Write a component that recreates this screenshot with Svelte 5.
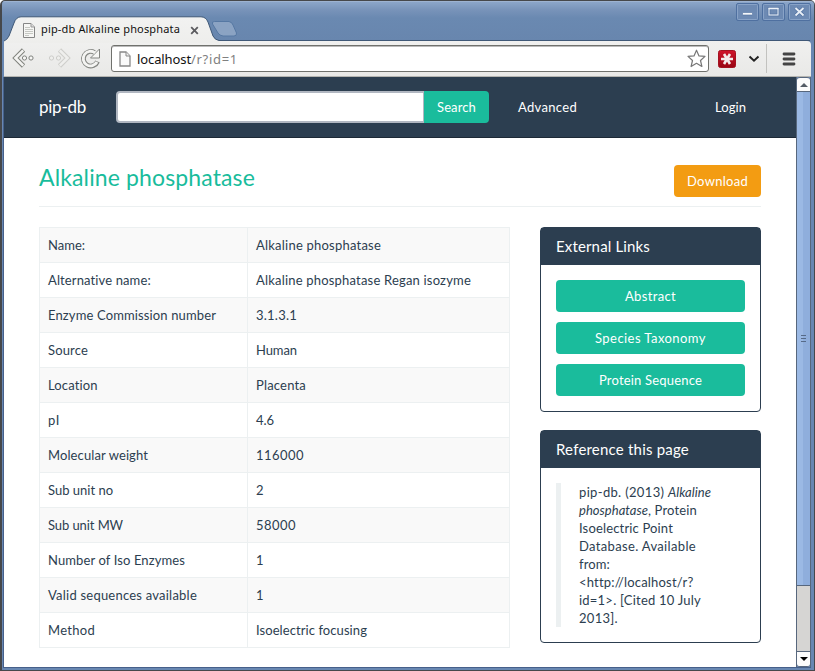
<script>
  const rows = [
    ['Name:', 'Alkaline phosphatase', 37, 125],
    ['Alternative name:', 'Alkaline phosphatase Regan isozyme', 103, 215],
    ['Enzyme Commission number', '3.1.3.1', 168, 41],
    ['Source', 'Human', 40, 41],
    ['Location', 'Placenta', 50, 50],
    ['pI', '4.6', 12, 18],
    ['Molecular weight', '116000', 100, 48],
    ['Sub unit no', '2', 65, 8],
    ['Sub unit MW', '58000', 75, 40],
    ['Number of Iso Enzymes', '1', 137, 8],
    ['Valid sequences available', '1', 149, 8],
    ['Method', 'Isoelectric focusing', 47, 111]
  ];
  const links = [['Abstract', 51], ['Species Taxonomy', 111], ['Protein Sequence', 103]];
  const quote = [
    [['pip-db. (2013) ', 89, 0], ['Alkaline', 43, 1]],
    [['phosphatase', 69, 1], [', Protein', 49, 0]],
    [['Isoelectric Point', 94, 0]],
    [['Database. Available', 117, 0]],
    [['from:', 31, 0]],
    [['<http://localhost/r?', 114, 0]],
    [['id=1>. [Cited 10 July', 122, 0]],
    [['2013].', 39, 0]]
  ];

  // Spreads the glyphs evenly so that the run takes up exactly w pixels.
  function fit(node, w) {
    const range = document.createRange();
    range.selectNodeContents(node);
    const n = node.textContent.length;
    const apply = () => {
      node.style.letterSpacing = '0px';
      const natural = range.getBoundingClientRect().width;
      node.style.letterSpacing = (w - natural) / n + 'px';
    };
    apply();
    document.fonts?.ready.then(apply);
  }
</script>

<div class="window">
  <header class="titlebar">
    <svg class="tabs" width="240" height="28" viewBox="0 0 240 28">
      <defs><linearGradient id="tab" x2="0" y2="1"><stop stop-color="#f2f2f1" /><stop offset="1" stop-color="#eeeeec" /></linearGradient></defs>
      <path d="M0 28V26Q3 25 5 21L10 8Q12 2 17 1.800H197Q202 2 204 7L209 21Q211 25 215 25.500V28Z" fill="url(#tab)" />
      <path d="M0 26Q3 25 5 21L10 8Q12 2 17 1.800H197Q202 2 204 7L209 21Q211 25 215 25.500" fill="none" stroke="#3f5877" />
      <path d="M210.500 6.500H225Q228 7 229 10L232.500 18Q233 21 230 21H219Q215.500 20.500 214 18L208.500 9Q207.500 6.500 210.500 6.500Z" fill="#8ba3c3" stroke="#5678a3" />
    </svg>
    <div class="tabtext">
      <svg width="14" height="17" viewBox="0 0 14 17"><path d="M1.500 1.500H9L12.500 5V15.500H1.500Z" fill="#f6f6f4" stroke="#858585" /><path d="M9 1.500V5H12.500" fill="#ddd" stroke="#999" /><path d="M3 5.500H8M3 7.500H11M3 9.500H11M3 11.500H11M3 13.500H7" stroke="#c5c7c2" /></svg>
      <span class="label"><span use:fit={139}>pip-db Alkaline phosphata</span></span>
      <svg width="9" height="9" viewBox="0 0 9 9"><path d="M1.200 1.200L7.800 7.800M7.800 1.200L1.200 7.800" stroke="#5b5b5f" stroke-width="1.800" /></svg>
    </div>
    <div class="controls">
      <svg width="23" height="18" viewBox="0 0 23 18"><rect x=".5" y=".5" width="22" height="17" rx="1.500" class="b" /><rect x="1.500" y="1.500" width="20" height="15" rx="1" class="i" /><rect x="6.500" y="9.500" width="10" height="2.500" rx=".5" fill="#f4f7fa" stroke="#5070a0" stroke-width=".6" /></svg>
      <svg width="23" height="18" viewBox="0 0 23 18"><rect x=".5" y=".5" width="22" height="17" rx="1.500" class="b" /><rect x="1.500" y="1.500" width="20" height="15" rx="1" class="i" /><rect x="7" y="5.500" width="9" height="6.500" fill="none" stroke="#5070a0" stroke-width="2.600" /><rect x="7" y="5.500" width="9" height="6.500" fill="none" stroke="#e0e8f2" stroke-width="1.200" /><path d="M6.500 5.500H16.500" stroke="#eef3f9" stroke-width="1.500" /></svg>
      <svg width="23" height="18" viewBox="0 0 23 18"><rect x=".5" y=".5" width="22" height="17" rx="1.500" class="b" /><rect x="1.500" y="1.500" width="20" height="15" rx="1" class="i" /><path d="M7.500 5L15.500 12.500M15.500 5L7.500 12.500" stroke="#5070a0" stroke-width="3.200" /><path d="M7.500 5L15.500 12.500M15.500 5L7.500 12.500" stroke="#e8eef6" stroke-width="1.900" /></svg>
    </div>
  </header>

  <div class="toolbar">
    <svg class="nav" width="92" height="26" viewBox="0 0 92 26">
      <g fill="none" stroke-linejoin="miter">
        <path d="M15.500 4L7.500 12L15.500 20" stroke="#83857f" stroke-width="4.600" />
        <path d="M15.200 4.400L7.500 12L15.200 19.600" stroke="#f4f4f2" stroke-width="2.600" />
        <g stroke="#80827e" fill="#f7f7f5"><circle cx="16.500" cy="12" r="2.100" /><circle cx="23" cy="12" r="2.100" /></g>
        <path d="M51.500 4L59.500 12L51.500 20" stroke="#cfcfcc" stroke-width="4.600" />
        <path d="M51.800 4.400L59.500 12L51.800 19.600" stroke="#efefed" stroke-width="2.600" />
        <g stroke="#cdcdca" fill="#efefed"><circle cx="43.500" cy="12" r="2.100" /><circle cx="50.500" cy="12" r="2.100" /></g>
        <path d="M89.500 15.500A7.300 7.300 0 1 1 86.500 6.500" stroke="#858783" stroke-width="4.800" />
        <path d="M91.500 3V12H82.500Z" fill="#f7f7f5" stroke="#858783" />
        <path d="M89 16A7.300 7.300 0 1 1 87 6.800" stroke="#f4f4f2" stroke-width="2.800" />
      </g>
    </svg>
    <div class="omnibox">
      <svg width="12" height="16" viewBox="0 0 12 16"><path d="M1 1H7L11 5V15H1Z" fill="#fafafa" stroke="#888" stroke-width="1.300" /><path d="M7 1V5H11" fill="#eee" stroke="#888" /></svg>
      <span class="url"><span class="host" use:fit={54}>localhost</span><span use:fit={47}>/r?id=1</span></span>
      <svg width="19" height="19" viewBox="0 0 19 19"><path d="M9.500 1.200L12 6.900L18 7.400L13.500 11.500L14.900 17.500L9.500 14.300L4.100 17.500L5.500 11.500L1 7.400L7 6.900Z" fill="#fff" stroke="#777" stroke-width="1.200" stroke-linejoin="round" /></svg>
    </div>
    <svg class="ext" width="18" height="18" viewBox="0 0 18 18"><defs><linearGradient id="red" x2="0" y2="1"><stop stop-color="#d0142b" /><stop offset="1" stop-color="#990613" /></linearGradient></defs><rect x=".5" y=".5" width="17" height="17" rx="2" fill="url(#red)" stroke="#a31320" /><path d="M3 9H15M6 4L12 14M12 4L6 14" stroke="#f4ecec" stroke-width="2.600" /></svg>
    <svg class="chev" width="12" height="8" viewBox="0 0 12 8"><path d="M1.500 1.500L6 5.700L10.500 1.500" fill="none" stroke="#222" stroke-width="2" /></svg>
    <span class="sep"></span>
    <svg class="menu" width="14" height="14" viewBox="0 0 14 14"><path d="M2 2H12M2 7H12M2 12H12" stroke="#444" stroke-width="2.800" stroke-linecap="round" /></svg>
  </div>

  <div class="viewport">
    <main class="page">
      <nav class="navbar">
        <span class="brand"><span use:fit={47}>pip-db</span></span>
        <div class="search"></div>
        <div class="go"><span use:fit={39}>Search</span></div>
        <span class="adv"><span use:fit={59}>Advanced</span></span>
        <span class="login"><span use:fit={31}>Login</span></span>
      </nav>
      <div class="heading">
        <h1><span use:fit={216}>Alkaline phosphatase</span></h1>
        <div class="download"><span use:fit={61}>Download</span></div>
      </div>
      <div class="columns">
        <div class="left">
          <div class="table">
            {#each rows as [k, v, kw, vw]}
              <div class="row">
                <div class="key"><span use:fit={kw}>{k}</span></div>
                <div class="val"><span use:fit={vw}>{v}</span></div>
              </div>
            {/each}
          </div>
          <p class="note"><span use:fit={222}>All data and resources are collected</span></p>
        </div>
        <aside>
          <section>
            <h2><span use:fit={94}>External Links</span></h2>
            <div class="links">
              {#each links as [name, w]}<div class="btn"><span use:fit={w}>{name}</span></div>{/each}
            </div>
          </section>
          <section>
            <h2><span use:fit={133}>Reference this page</span></h2>
            <blockquote>
              {#each quote as line}
                <div>{#each line as [t, w, it]}<span class:it use:fit={w}>{t}</span>{/each}</div>
              {/each}
            </blockquote>
          </section>
        </aside>
      </div>
    </main>
    <div class="scroll">
      <div class="arrow up"><svg width="8" height="5" viewBox="0 0 8 5"><path d="M0 5L4 1L8 5Z" fill="#555d66" /></svg></div>
      <div class="thumb"><i></i><i></i><i></i></div>
      <div class="track"></div>
      <div class="arrow down"><svg width="8" height="5" viewBox="0 0 8 5"><path d="M0 0H8L4 4Z" fill="#000" /></svg></div>
    </div>
  </div>
</div>

<style>
  :global(body) { background: #fff; }
  * { box-sizing: border-box; }
  .window {
    width: 815px; height: 671px; overflow: hidden; display: flex; flex-direction: column;
    border: 1px solid #46484b; border-left-width: 2px; border-radius: 5px 5px 0 0;
    background: #6887b2; font: 13px/18px Lato, sans-serif; color: #2c3e50;
  }
  span { white-space: pre; }
  .titlebar { height: 40px; flex: none; position: relative; background: linear-gradient(#8ca6c9 0, #7893b9 8px, #6a89b1 16px, #6886ae 38px); border-top: 1px solid #9db3d1; }
  .titlebar::after { content: ''; position: absolute; left: 216px; right: 4px; bottom: 0; height: 1px; background: #3f5877; }
  .tabs { position: absolute; left: 2px; top: 13px; z-index: 1; }
  .tabtext { position: absolute; z-index: 2; left: 20px; top: 18px; display: flex; align-items: center; height: 20px; }
  .label { width: 149px; margin-left: 5px; margin-top: -2px; color: #111; font: 11px/18px 'Noto Sans', sans-serif; }
  .controls { position: absolute; right: 3px; top: 1px; display: flex; gap: 3px; }
  .b { fill: #6d8ab3; stroke: #4f70a0; }
  .i { fill: none; stroke: #89a3c7; }
  .toolbar { height: 36px; flex: none; margin: 0 3px 0 2px; background: linear-gradient(#f0f0ef, #e9e9e7); border-bottom: 1px solid #b5b5b1; border-top-right-radius: 4px; display: flex; align-items: center; }
  .nav { margin-left: 4px; flex: none; }
  .omnibox { margin-left: 11px; width: 598px; height: 27px; border: 1px solid #70716d; border-radius: 3px; background: #fff; box-shadow: inset 0 1px #bbb; display: flex; align-items: center; padding: 0 2px 0 7px; }
  .url { flex: 1; margin-left: 6px; color: #808080; font: 13px/20px 'Noto Sans', sans-serif; }
  .host { color: #111; }
  .ext { margin-left: 9px; }
  .chev { margin-left: 12px; }
  .sep { width: 1px; height: 29px; background: #c2c2bf; margin-left: 6px; }
  .menu { margin-left: 15px; }
  .viewport { height: 591px; flex: none; margin: 0 3px 0 1px; border-left: 1px solid #46608a; border-bottom: 1px solid #46608a; display: flex; }
  .page { width: 792px; height: 590px; overflow: hidden; background: #fff; }
  .navbar { height: 61px; background: #2c3e50; border-bottom: 1px solid #1d2936; display: flex; align-items: center; padding-left: 35px; color: #fff; }
  .brand { width: 77px; font-size: 17px; }
  .search { width: 308px; height: 32px; background: #fff; border: 2px solid #b1b7c1; border-right-width: 1px; border-radius: 4px 0 0 4px; }
  .go { width: 65px; height: 32px; line-height: 32px; padding-left: 13px; background: #1abc9c; border-radius: 0 4px 4px 0; }
  .adv { margin-left: 29px; width: 197px; }
  .heading { margin: 0 35px; height: 69px; border-bottom: 1px solid #ecf0f1; display: flex; justify-content: space-between; }
  h1 { margin: 24px 0 0; font-size: 23px; line-height: 30px; font-weight: 400; color: #18bc9c; }
  .download { margin-top: 27px; width: 87px; height: 32px; line-height: 32px; text-align: center; background: #f39c12; color: #fff; border-radius: 4px; }
  .columns { display: flex; justify-content: space-between; margin: 20px 35px 0; }
  .table { width: 471px; border: 1px solid #ecf0f1; border-bottom: 0; }
  .row { height: 35px; display: flex; border-bottom: 1px solid #ecf0f1; line-height: 35px; }
  .row:nth-child(odd) { background: #f9f9f9; }
  .key { width: 208px; padding-left: 8px; border-right: 1px solid #ecf0f1; }
  .val { padding-left: 8px; }
  .note { margin: 15px 0 0 9px; }
  aside { width: 221px; }
  section { border: 1px solid #2c3e50; border-radius: 4px; margin-bottom: 18px; padding-bottom: 15px; }
  h2 { margin: 0; height: 37px; line-height: 37px; padding-left: 15px; background: #2c3e50; color: #fff; font-size: 15px; font-weight: 400; }
  .links { padding: 15px 15px 0; display: flex; flex-direction: column; gap: 10px; }
  .btn { height: 32px; line-height: 32px; background: #1abc9c; color: #fff; border-radius: 4px; text-align: center; }
  blockquote { margin: 15px 15px 0; border-left: 5px solid #ecf0f1; padding-left: 18px; }
  .it { font-style: italic; }
  .scroll { width: 15px; height: 590px; border: solid #57677d; border-width: 0 1px; display: flex; flex-direction: column; }
  .arrow { height: 15px; background: #fcfcfc; display: flex; align-items: center; justify-content: center; border-bottom: 1px solid #57677d; flex: none; }
  .up { border-top: 1px solid #57677d; border-radius: 3px 3px 0 0; }
  .thumb { height: 494px; background: linear-gradient(90deg, #9bb9e4 50%, #8faedc 50%); display: flex; flex-direction: column; align-items: center; justify-content: center; gap: 2px; border-bottom: 1px solid #57677d; }
  .thumb i { width: 5px; height: 1px; background: #566a88; }
  .track { flex: 1; background: #d6d5d3; border-bottom: 1px solid #57677d; }
  .down { border-radius: 0 0 3px 3px; }
</style>
